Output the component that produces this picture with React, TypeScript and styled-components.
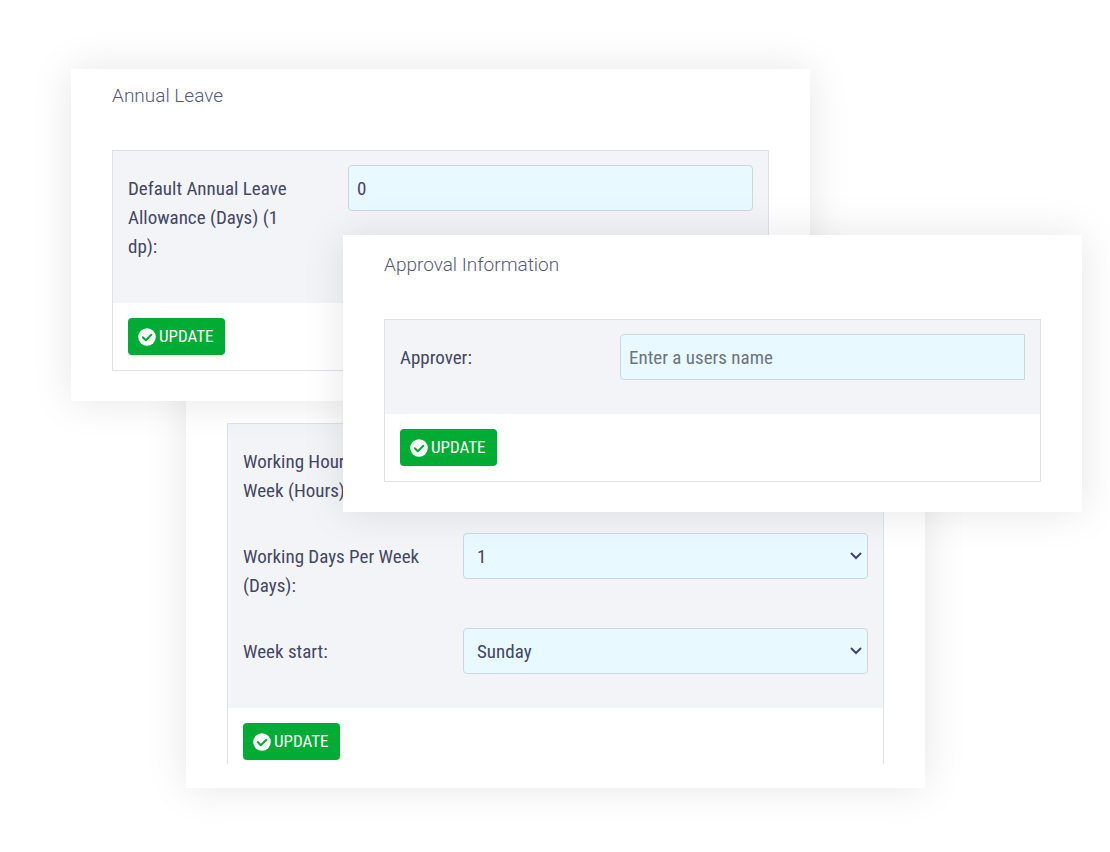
import React, { useId } from "react";
import styled, { createGlobalStyle } from "styled-components";

const GlobalStyle = createGlobalStyle`
  *, *::before, *::after { box-sizing: border-box; }
  body {
    margin: 0;
    background: #ffffff;
    color: #434764;
    font-family: "Roboto Condensed", Roboto, sans-serif;
    font-size: 19px;
    line-height: 29px;
  }
`;

const Stage = styled.main`
  display: grid;
  grid-template-columns: 71fr 115fr 157fr 467fr 115fr 157fr 28fr;
  align-items: start;
  min-height: 100vh;
  overflow: hidden;
`;

interface CardProps {
  $columns: string;
  $top: number;
  $layer: number;
  $padTop: number;
  $padBottom: number;
}

const Card = styled.form<CardProps>`
  grid-row: 1;
  grid-column: ${(p) => p.$columns};
  margin-top: ${(p) => p.$top}px;
  padding: ${(p) => p.$padTop}px 41px ${(p) => p.$padBottom}px;
  z-index: ${(p) => p.$layer};
  background: #ffffff;
  box-shadow: 0 0 40px rgba(0, 0, 0, 0.1);
`;

const Title = styled.h2`
  margin: 0 0 40px;
  color: #565a76;
  font-family: Roboto, sans-serif;
  font-size: 19px;
  font-weight: 300;
`;

const Panel = styled.section<{ $open?: boolean }>`
  border: 1px solid #dfe3e8;
  border-bottom-width: ${(p) => (p.$open ? 0 : 1)}px;
`;

const PanelBody = styled.div`
  display: grid;
  gap: 20px;
  padding: 14px 15px 34px;
  background: #f3f4f7;
`;

const Row = styled.div`
  display: grid;
  grid-template-columns: minmax(0, 188fr) minmax(0, 405fr);
  column-gap: 32px;
  align-items: start;
`;

const Label = styled.label`
  padding: 9px 8px 8px 0;
`;

const fieldStyle = `
  width: 100%;
  height: 46px;
  border: 1px solid #ced7df;
  background: #e8f9ff;
  color: #434764;
  font: inherit;
`;

const TextInput = styled.input<{ $flatEnd?: boolean }>`
  ${fieldStyle}
  padding: 0 8px;
  border-radius: ${(p) => (p.$flatEnd ? "4px 0 0 4px" : "4px")};
  &::placeholder { color: #6c757d; opacity: 1; }
`;

const SelectBox = styled.div`
  display: grid;
  align-items: center;
  & > * { grid-area: 1 / 1; }
`;

const Select = styled.select`
  ${fieldStyle}
  padding: 0 28px 0 13px;
  border-radius: 4px;
  appearance: none;
`;

const Chevron = styled.svg`
  justify-self: end;
  margin-right: 6px;
  pointer-events: none;
`;

const PanelFooter = styled.div<{ $open?: boolean }>`
  padding: 15px 15px ${(p) => (p.$open ? 4 : 15)}px;
`;

const UpdateButton = styled.button`
  display: flex;
  align-items: center;
  gap: 3px;
  height: 37px;
  padding: 0 11px 0 10px;
  border: 0;
  border-radius: 4px;
  background: #00ac33;
  color: #ffffff;
  font: inherit;
  font-size: 17px;
`;

function CheckIcon() {
  return (
    <svg width="18" height="18" viewBox="0 0 18 18" aria-hidden="true">
      <circle cx="9" cy="9" r="8.800" fill="#ffffff" />
      <path
        d="M4.800 9.300 7.800 12.200 13.400 6.700"
        fill="none"
        stroke="#00ac33"
        strokeWidth="2"
        strokeLinecap="round"
        strokeLinejoin="round"
      />
    </svg>
  );
}

function TextField(props: { label: string; value?: string; placeholder?: string; flatEnd?: boolean }) {
  const id = useId();
  return (
    <Row>
      <Label htmlFor={id}>{props.label}</Label>
      <TextInput
        id={id}
        type="text"
        defaultValue={props.value}
        placeholder={props.placeholder}
        $flatEnd={props.flatEnd}
      />
    </Row>
  );
}

function SelectField(props: { label: string; value: string }) {
  const id = useId();
  return (
    <Row>
      <Label htmlFor={id}>{props.label}</Label>
      <SelectBox>
        <Select id={id} defaultValue={props.value}>
          <option>{props.value}</option>
        </Select>
        <Chevron width="12" height="8" viewBox="0 0 12 8" aria-hidden="true">
          <path d="M1.500 1.500 6 6l4.500-4.500" fill="none" stroke="#434764" strokeWidth="2" strokeLinecap="round" />
        </Chevron>
      </SelectBox>
    </Row>
  );
}

function Footer({ open }: { open?: boolean }) {
  return (
    <PanelFooter $open={open}>
      <UpdateButton type="button">
        <CheckIcon />
        UPDATE
      </UpdateButton>
    </PanelFooter>
  );
}

export default function App() {
  return (
    <>
      <GlobalStyle />
      <Stage>
        <Card $columns="2 / 5" $top={69} $layer={2} $padTop={12} $padBottom={30}>
          <Title>Annual Leave</Title>
          <Panel>
            <PanelBody>
              <TextField label="Default Annual Leave Allowance (Days) (1 dp):" value="0" />
            </PanelBody>
            <Footer />
          </Panel>
        </Card>
        <Card $columns="4 / 7" $top={235} $layer={3} $padTop={15} $padBottom={30}>
          <Title>Approval Information</Title>
          <Panel>
            <PanelBody>
              <TextField label="Approver:" placeholder="Enter a users name" flatEnd />
            </PanelBody>
            <Footer />
          </Panel>
        </Card>
        <Card $columns="3 / 6" $top={342} $layer={1} $padTop={81} $padBottom={24}>
          <Panel $open>
            <PanelBody>
              <TextField label="Working Hours Per Week (Hours):" />
              <SelectField label="Working Days Per Week (Days):" value="1" />
              <SelectField label="Week start:" value="Sunday" />
            </PanelBody>
            <Footer open />
          </Panel>
        </Card>
      </Stage>
    </>
  );
}
